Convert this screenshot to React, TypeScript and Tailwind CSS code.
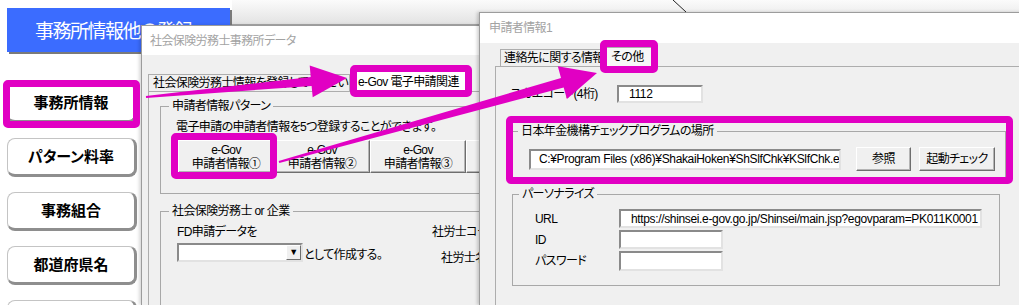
import React from 'react';

const font = "font-['Liberation_Sans','Noto_Sans_CJK_JP',sans-serif]";

type Pt = [number, number];

// tapered arrow polygon: thin tail, thicker shaft, triangular head
const arrowPoints = (tail: Pt, tip: Pt, tailW: number, shaftW: number, headW: number, headL: number) => {
  const dx = tip[0] - tail[0];
  const dy = tip[1] - tail[1];
  const len = Math.hypot(dx, dy);
  const ux = dx / len;
  const uy = dy / len;
  const nx = -uy;
  const ny = ux;
  const bx = tip[0] - ux * headL;
  const by = tip[1] - uy * headL;
  const p = (x: number, y: number) => `${x.toFixed(1)},${y.toFixed(1)}`;
  return [
    p(tail[0] + (nx * tailW) / 2, tail[1] + (ny * tailW) / 2),
    p(bx + (nx * shaftW) / 2, by + (ny * shaftW) / 2),
    p(bx + (nx * headW) / 2, by + (ny * headW) / 2),
    p(tip[0], tip[1]),
    p(bx - (nx * headW) / 2, by - (ny * headW) / 2),
    p(bx - (nx * shaftW) / 2, by - (ny * shaftW) / 2),
    p(tail[0] - (nx * tailW) / 2, tail[1] - (ny * tailW) / 2),
  ].join(' ');
};

const SideButton = ({ label }: { label: string }) => (
  <div className="w-[130px] h-[39px] shrink-0 flex items-center justify-center rounded-[8px] bg-white border border-[#c4c4c4] border-r-[3px] border-b-[3px] border-r-[#8e8e8e] border-b-[#8e8e8e] font-['Noto_Sans_CJK_JP',sans-serif] font-bold text-[15px] tracking-[0px] text-black">
    {label}
  </div>
);

const SunkenInput = ({ className, text }: { className: string; text?: string }) => (
  <div
    className={`shrink-0 bg-white border-2 border-t-[#8a8a8a] border-l-[#8a8a8a] border-r-[#e2e2e2] border-b-[#e2e2e2] flex items-center pl-[8px] overflow-hidden whitespace-nowrap tracking-[-0.35px] ${className}`}
  >
    {text}
  </div>
);

const RaisedButton = ({ className, children }: { className: string; children: React.ReactNode }) => (
  <div
    className={`shrink-0 bg-[#f0f0f0] border border-t-white border-l-white border-r-[#6e6e6e] border-b-[#6e6e6e] shadow-[inset_-1px_-1px_0_#b4b4b4] flex flex-col items-center justify-center leading-[14px] whitespace-nowrap ${className}`}
  >
    {children}
  </div>
);

const Sidebar = () => (
  <div className="absolute left-0 top-0 w-[232px] h-full bg-white pt-[8px] pl-[7px]">
    <div className="w-[223px] h-[44px] bg-[#3b6cff] flex items-center pl-[28px] text-white text-[19px] tracking-[-1.5px] font-['Noto_Sans_CJK_JP',sans-serif] shadow-[2px_2px_0_#7a7a7a]">
      事務所情報他の登録
    </div>
    <div className="mt-[32px] flex flex-col gap-[15px]">
      <SideButton label="事務所情報" />
      <SideButton label="パターン料率" />
      <SideButton label="事務組合" />
      <SideButton label="都道府県名" />
      <SideButton label="" />
    </div>
  </div>
);

const OfficeWindow = () => (
  <div className="absolute left-[141px] top-[25px] w-[350px] h-[280px] overflow-hidden flex flex-col border-l border-t border-[#9c9c9c] shadow-[-2px_0_3px_rgba(0,0,0,0.15)]">
    <div className="h-[29px] shrink-0 bg-white flex items-center pl-[8px] text-[#a3a3a3]">社会保険労務士事務所データ</div>
    <div className="flex-1 bg-[#f0f0f0] pt-[19px] pl-[6px] flex flex-col">
      <div className="flex items-end h-[17px] shrink-0">
        <div className="w-[202px] h-[17px] pl-[4px] flex items-center border border-b-0 border-[#adadad] whitespace-nowrap overflow-hidden">
          社会保険労務士情報を登録してください
        </div>
        <div className="w-[120px] h-[20px] pl-[7px] flex items-center bg-white border border-b-0 border-[#adadad] whitespace-nowrap">
          e-Gov 電子申請関連
        </div>
      </div>
      <div className="flex-1 border-t border-l border-[#adadad] pl-[11px] pt-[6px]">
        <fieldset className="w-[330px] h-[96px] border border-[#a8a8a8]">
          <legend className="ml-[8px] px-[3px] leading-[16px]">申請者情報パターン</legend>
          <div className="pl-[15px] mt-[6px] leading-[14px] whitespace-nowrap">電子申請の申請者情報を5つ登録することができます。</div>
          <div className="pl-[17px] mt-[6px] flex">
            <RaisedButton className="w-[96px] h-[33px]">
              <span>e-Gov</span>
              <span>申請者情報①</span>
            </RaisedButton>
            <RaisedButton className="w-[96px] h-[33px]">
              <span>e-Gov</span>
              <span>申請者情報②</span>
            </RaisedButton>
            <RaisedButton className="w-[96px] h-[33px]">
              <span>e-Gov</span>
              <span>申請者情報③</span>
            </RaisedButton>
            <RaisedButton className="w-[96px] h-[33px]">
              <span>e-Gov</span>
              <span>申請者情報④</span>
            </RaisedButton>
          </div>
        </fieldset>
        <fieldset className="mt-[9px] w-[330px] h-[110px] border border-[#a8a8a8]">
          <legend className="ml-[8px] px-[3px] leading-[16px] whitespace-nowrap">社会保険労務士 or 企業</legend>
          <div className="flex pl-[16px] mt-[6px]">
            <div className="w-[255px] flex flex-col">
              <div className="leading-[14px]">FD申請データを</div>
              <div className="mt-[4px] flex items-end">
                <div className="w-[126px] h-[19px] flex bg-white border-2 border-t-[#8a8a8a] border-l-[#8a8a8a] border-r-[#e2e2e2] border-b-[#e2e2e2]">
                  <div className="flex-1" />
                  <div className="w-[15px] h-full bg-[#f0f0f0] border border-t-white border-l-white border-r-[#6e6e6e] border-b-[#6e6e6e] flex items-center justify-center text-[9px] leading-none">
                    ▼
                  </div>
                </div>
                <span className="ml-[1px] leading-[14px]">として作成する。</span>
              </div>
            </div>
            <div className="flex flex-col whitespace-nowrap leading-[14px]">
              <div>社労士コード</div>
              <div className="mt-[12px] pl-[9px]">社労士名</div>
            </div>
          </div>
        </fieldset>
      </div>
    </div>
  </div>
);

const ApplicantWindow = () => (
  <div className="absolute left-[479px] top-[12px] w-[545px] h-[293px] overflow-hidden flex flex-col border-l border-t border-[#9c9c9c] shadow-[-2px_0_3px_rgba(0,0,0,0.18)]">
    <div className="h-[30px] shrink-0 bg-white flex items-center pl-[9px] text-[#a3a3a3]">申請者情報1</div>
    <div className="flex-1 bg-[#f0f0f0] pt-[6px] pl-[15px] flex flex-col">
      <div className="ml-[5px] flex items-end h-[17px] shrink-0">
        <div className="w-[104px] h-[17px] pl-[3px] flex items-center border border-b-0 border-[#adadad] whitespace-nowrap">
          連絡先に関する情報
        </div>
        <div className="w-[50px] h-[19px] pl-[6px] flex items-center bg-[#f7f7f7] border border-b-0 border-[#adadad]">
          その他
        </div>
      </div>
      <div className="flex-1 border-t border-l border-[#adadad] pl-[14px]">
        <div className="mt-[18px] flex items-center">
          <div className="w-[107px] whitespace-nowrap">ユカエコード(4桁)</div>
          <SunkenInput className="w-[86px] h-[18px] pl-[10px]" text="1112" />
        </div>
        <fieldset className="mt-[20px] ml-[2px] w-[494px] h-[57px] border border-[#a8a8a8]">
          <legend className="ml-[5px] px-[3px] leading-[16px]">日本年金機構チェックプログラムの場所</legend>
          <div className="mt-[8px] pl-[16px] flex items-center">
            <SunkenInput
              className="w-[312px] h-[21px]"
              text="C:¥Program Files (x86)¥ShakaiHoken¥ShSlfChk¥KSlfChk.exe"
            />
            <RaisedButton className="ml-[15px] w-[55px] h-[24px]">参照</RaisedButton>
            <RaisedButton className="ml-[8px] w-[76px] h-[24px]">起動チェック</RaisedButton>
          </div>
        </fieldset>
        <fieldset className="mt-[6px] ml-[2px] w-[488px] h-[100px] border border-[#a8a8a8]">
          <legend className="ml-[6px] px-[3px] leading-[16px]">パーソナライズ</legend>
          <div className="mt-[7px] flex flex-col gap-[2px]">
            <div className="flex items-center">
              <div className="w-[106px] pl-[22px]">URL</div>
              <SunkenInput
                className="w-[363px] h-[19px] pl-[10px]"
                text="https://shinsei.e-gov.go.jp/Shinsei/main.jsp?egovparam=PK011K0001"
              />
            </div>
            <div className="flex items-center">
              <div className="w-[106px] pl-[22px]">ID</div>
              <SunkenInput className="w-[104px] h-[19px]" />
            </div>
            <div className="flex items-center">
              <div className="w-[106px] pl-[22px]">パスワード</div>
              <SunkenInput className="w-[104px] h-[20px]" />
            </div>
          </div>
        </fieldset>
      </div>
    </div>
  </div>
);

const App = () => {
  const arrow1 = arrowPoints([146, 97], [347, 78], 2, 9, 32, 36);
  const arrow2 = arrowPoints([279, 162], [597, 73], 2, 10, 34, 36);
  return (
    <div className={`relative w-[1019px] h-[305px] overflow-hidden bg-white text-[12px] tracking-[-0.6px] text-black [font-feature-settings:'palt'] ${font}`}>
      <div className="absolute left-[232px] top-0 right-0 h-[25px] bg-linear-to-b from-[#fbfbfb] to-[#e3e3e3] border-b border-[#a8a8a8]" />
      <Sidebar />
      <OfficeWindow />
      <ApplicantWindow />

      {/* highlight boxes */}
      <div className="absolute left-[3px] top-[80px] w-[137px] h-[48px] border-[7px] border-[#e100c3] rounded-[5px]" />
      <div className="absolute left-[350px] top-[65px] w-[122px] h-[32px] border-[7px] border-[#e100c3] rounded-[5px]" />
      <div className="absolute left-[171px] top-[133px] w-[106px] h-[46px] border-[7px] border-[#e100c3] rounded-[5px]" />
      <div className="absolute left-[600px] top-[40px] w-[58px] h-[33px] border-[7px] border-[#e100c3] rounded-[5px]" />
      <div className="absolute left-[506px] top-[116px] w-[507px] h-[68px] border-[7px] border-[#e100c3] rounded-[5px]" />

      <svg className="absolute left-0 top-0 pointer-events-none" width="1019" height="305">
        <line x1="673" y1="0" x2="686" y2="12" stroke="#222" strokeWidth="1" />
        <polygon points={arrow1} fill="#e100c3" />
        <polygon points={arrow2} fill="#e100c3" />
      </svg>
    </div>
  );
};

export default App;
